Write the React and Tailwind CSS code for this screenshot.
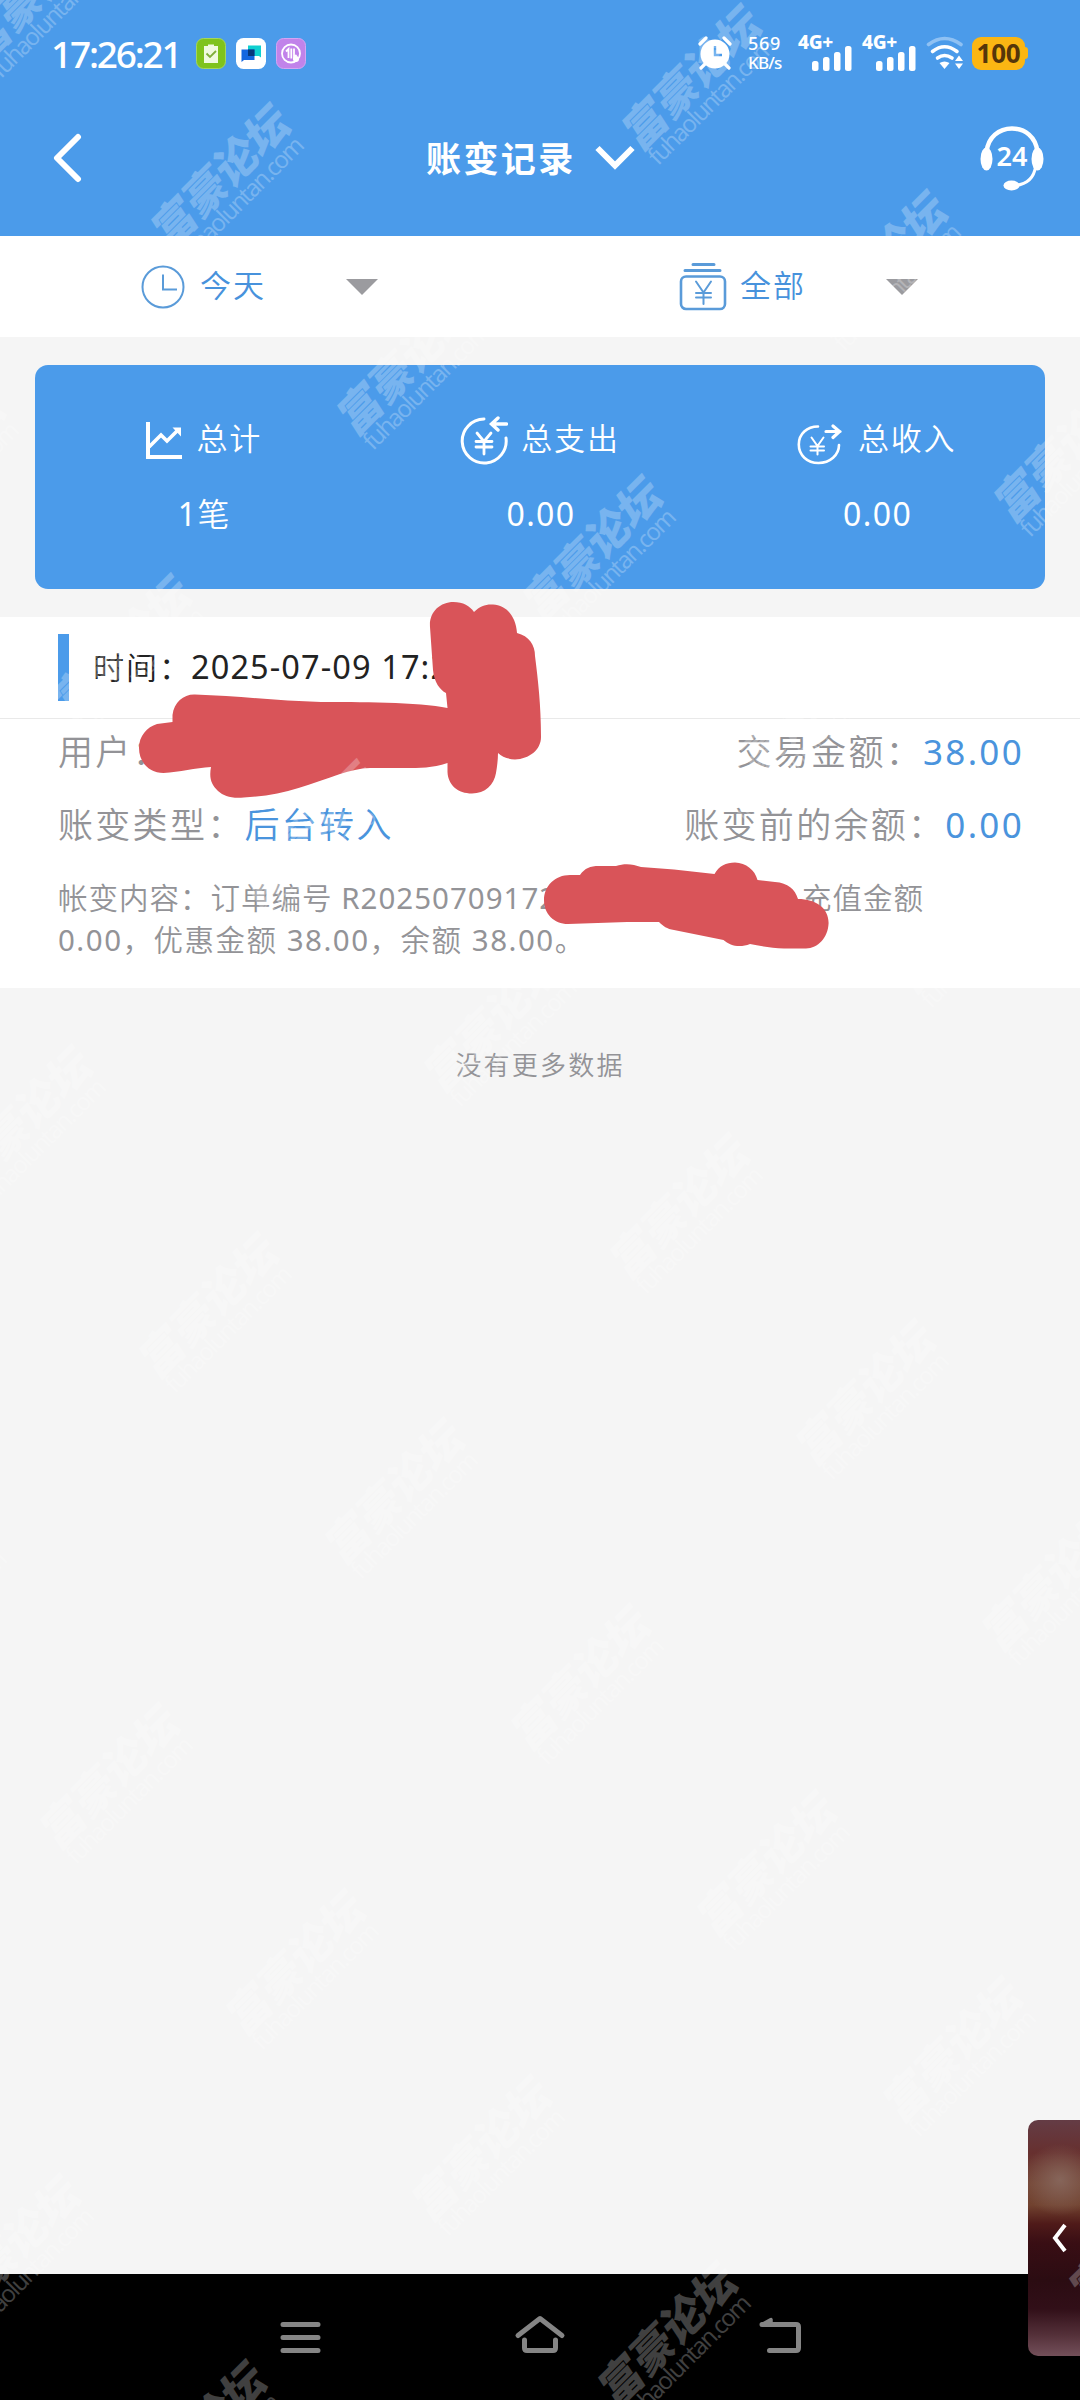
import React from "react";

const FONT = "font-['Noto_Sans','Noto_Sans_CJK_SC',sans-serif]";

// Repeating diagonal forum stamp: two step vectors spread it over the screen
const WATERMARKS = [];
for (let i = -3; i <= 15; i++) {
	for (let j = -5; j <= 4; j++) {
		const x = 265 + i * 186 + j * 471;
		const y = 108 + i * 186.1 - j * 99;
		if (x > -60 && x < 1240 && y > -180 && y < 2440) {
			WATERMARKS.push({ x, y });
		}
	}
}

const Watermark = () => (
	<div className="pointer-events-none absolute inset-0 overflow-hidden text-white opacity-25">
		{WATERMARKS.map(({ x, y }) => (
			<div
				key={`${x}-${y}`}
				className="absolute h-[66px] w-[180px] origin-top-left -rotate-45"
				style={{ left: x - 124, top: y + 117 }}
			>
				<div className="h-[40px] w-max origin-bottom-left -skew-x-12 font-['Noto_Sans_CJK_SC',sans-serif] text-[44px] leading-[38px] font-black tracking-[-0.4px]">
					富豪论坛
				</div>
				<div className="w-max pl-[4px] font-['Open_Sans',sans-serif] text-[24px] leading-[23px] font-medium tracking-[-1.700px]">
					fuhaoluntan.com
				</div>
			</div>
		))}
	</div>
);

// Digits and latin letters are set one weight heavier than the Chinese text
const Mixed = ({ children }) =>
	children.split(/([0-9A-Z.]+)/).map((part, i) =>
		i % 2 ? (
			<span key={i} className="font-normal">
				{part}
			</span>
		) : (
			part
		)
	);

const Signal = () => (
	<div className="relative h-[36px] w-[54px]">
		<span className="absolute -top-[2px] left-0 text-[19px] leading-[18px] font-extrabold tracking-[-0.3px]">
			4G+
		</span>
		<svg className="absolute right-0 bottom-0" width="40" height="25" viewBox="0 0 40 25" fill="#fff">
			<rect x="0" y="15" width="6.5" height="10" rx="2.5" />
			<rect x="11" y="11" width="6.5" height="14" rx="2.5" />
			<rect x="22" y="6" width="6.5" height="19" rx="2.5" />
			<rect x="33" y="0" width="6.5" height="25" rx="2.5" />
		</svg>
	</div>
);

const StatusBar = () => (
	<div className="flex h-[106px] items-center pl-[51px] text-white">
		<span className="w-[145px] text-[37px] leading-none font-medium tracking-[-2.200px]">
			17:26:21
		</span>
		<div className="flex gap-[10px]">
			<svg width="30" height="31" viewBox="0 0 30 31">
				<rect x=".5" y=".5" width="29" height="30" rx="7" fill="#7fc31c" stroke="#a5d65e" />
				<path d="M8 8h4V6.500h6V8h4v17H8z" fill="#f0fadf" />
				<path d="M10.500 15.500l3.500 3.500 6-6" fill="none" stroke="#7fae3a" strokeWidth="1.800" />
			</svg>
			<svg width="30" height="31" viewBox="0 0 30 31">
				<rect width="30" height="31" rx="7.500" fill="#fff" />
				<path d="M12 7.500h13v12l-2-1.500H12z" fill="#0fd0d0" />
				<path d="M5.500 11.500h13V22H8l-2.500 2z" fill="#1366e0" />
				<path d="M12 11.500h6.500V18H12z" fill="#06377c" />
			</svg>
			<svg width="30" height="31" viewBox="0 0 30 31">
				<rect x=".5" y=".5" width="29" height="30" rx="7" fill="#c183ea" stroke="#d4a5f2" />
				<circle cx="15" cy="15.500" r="9" fill="none" stroke="#fff" strokeWidth="1.800" />
				<path d="M10 13.500l2.500-2.500v9M15.300 10.500v10M18 10.500v9l2.500-2.500" fill="none" stroke="#fff" strokeWidth="1.800" />
				<circle cx="20" cy="21" r="3" fill="#fff" />
			</svg>
		</div>
		<svg className="ml-[392px]" width="34" height="34" viewBox="0 0 34 34" fill="#fff">
			<circle cx="17" cy="18" r="14.500" />
			<path d="M2 8l6-6M32 8l-6-6M7 28l-4 4M27 28l4 4" stroke="#fff" strokeWidth="3.200" strokeLinecap="round" />
			<path d="M17 10v9h7" fill="none" stroke="#4b9bea" strokeWidth="2.400" />
		</svg>
		<div className="ml-[16px] flex w-[50px] flex-col text-[18px] leading-[20px] font-medium">
			<span className="tracking-[0.7px]">569</span>
			<span className="text-[17px] tracking-[-0.8px]">KB/s</span>
		</div>
		<div className="flex gap-[10px]">
			<Signal />
			<Signal />
		</div>
		<svg className="ml-[10px]" width="38" height="34" viewBox="0 0 38 34" fill="none" strokeWidth="3.600" strokeLinecap="round">
			<path d="M2.500 8.500Q18.500-3.500 35 8.500" stroke="#8fc1f3" />
			<path d="M6.500 15.500Q18.500 6 31 15.500" stroke="#fff" />
			<path d="M11.500 22Q18.500 17 26 22" stroke="#fff" />
			<path d="M13.500 27Q18.500 24 23.500 27L18.500 33z" fill="#fff" />
			<path d="M29 25l4-5.500 4 5.500zM29 27.500l4 5.500 4-5.500z" fill="#fff" />
		</svg>
		<div className="ml-[8px] flex h-[33px] w-[53px] items-center justify-center rounded-[9px] bg-[#fbb613] text-[26px] leading-none font-bold tracking-[-0.2px] text-[#55360a]">
			100
		</div>
		<span className="h-[12px] w-[3px] rounded-r bg-[#fbb613]" />
	</div>
);

const Header = () => (
	<header className="h-[236px] shrink-0 bg-[#4b9bea]">
		<StatusBar />
		<div className="flex h-[104px] items-center text-white">
			<svg className="ml-[53px]" width="30" height="50" viewBox="0 0 30 50" fill="none" stroke="#fff" strokeWidth="6" strokeLinecap="round" strokeLinejoin="round">
				<path d="M25 4L4 25l21 21" />
			</svg>
			<h1 className="ml-[343px] text-[35px] leading-none font-bold tracking-[2.400px]">
				账变记录
			</h1>
			<svg className="ml-[19px]" width="40" height="26" viewBox="0 0 40 26" fill="none" stroke="#fff" strokeWidth="6">
				<path d="M2.500 3L20 20.500 37.500 3" />
			</svg>
			<svg className="ml-[344px]" width="66" height="66" viewBox="0 0 66 66">
				<path d="M7.500 27C9 12 20 3.500 33 3.500S57 12 58.500 27" fill="none" stroke="#fff" strokeWidth="4.500" />
				<ellipse cx="7.500" cy="34" rx="6" ry="11.500" fill="#fff" />
				<ellipse cx="58.500" cy="34" rx="6" ry="11.500" fill="#fff" />
				<path d="M56.500 42c-1.500 10-8 17-20 18.500" fill="none" stroke="#fff" strokeWidth="3" />
				<ellipse cx="32.500" cy="60.500" rx="8" ry="5" fill="#fff" />
				<text x="33" y="40.500" textAnchor="middle" fontSize="27" fontWeight="600" fill="#fff">24</text>
			</svg>
		</div>
	</header>
);

const Caret = () => (
	<span className="h-0 w-0 border-x-[16px] border-t-[16px] border-x-transparent border-t-[#9b9b9f]" />
);

const Filters = () => (
	<div className="grid h-[101px] shrink-0 grid-cols-2 bg-white text-[31px] leading-none font-[350] tracking-[2px] text-[#4792dc]">
		<div className="flex items-center pl-[141px]">
			<svg width="44" height="44" viewBox="0 0 44 44" fill="none" stroke="#5a9bd9" strokeWidth="2">
				<circle cx="22" cy="22" r="20.500" />
				<path d="M22 9.500v15h14" />
			</svg>
			<span className="-mt-[2px] ml-[15px] w-[146px]">今天</span>
			<Caret />
		</div>
		<div className="flex items-center pl-[139px]">
			<svg width="48" height="49" viewBox="0 0 48 49" fill="none" stroke="#5a9bd9" strokeWidth="3" strokeLinecap="round">
				<path d="M14 2.500h21M6 8.500h35" />
				<rect x="2" y="14.500" width="44" height="32.500" rx="5" strokeWidth="2.600" />
				<path d="M17 19.500l7.500 11 7.500-11M24.500 30.500V42M17 31h15M17 35.500h15" strokeWidth="2" />
			</svg>
			<span className="-mt-[2px] ml-[13px] w-[146px]">全部</span>
			<Caret />
		</div>
	</div>
);

const ChartIcon = () => (
	<svg width="36" height="37" viewBox="0 0 36 37" fill="none" stroke="#fff" strokeWidth="4">
		<path d="M2 0v35h34" />
		<path d="M3 25l12-12 6 6L31 9" strokeWidth="3.600" />
		<path d="M26.500 5.500H35v9z" fill="#fff" stroke="none" />
	</svg>
);

const ExpenseIcon = () => (
	<svg width="48" height="49" viewBox="0 0 48 49" fill="none" stroke="#fff" strokeWidth="3" strokeLinecap="round">
		<path d="M24 3A22 22 0 1 0 46 22" />
		<path d="M46.500 8H32M38 2l-6.500 6 6.500 6" strokeWidth="3.400" />
		<path d="M17 17l7 8.500 7-8.500M24 25.500V38M16 25.500h16M16 31h16" strokeWidth="2.800" />
	</svg>
);

const IncomeIcon = () => (
	<svg className="mt-[8px]" width="45" height="41" viewBox="0 0 45 41" fill="none" stroke="#fff" strokeWidth="2.600" strokeLinecap="round">
		<path d="M21 2.500C10 2.500 1.800 10 1.800 20.500S10 39 21.500 39s20.500-8 20.500-18" />
		<path d="M29 7.500h14M36 2l6.500 5.500-6.500 6" strokeWidth="3.200" />
		<path d="M14.500 13.500l6 8.500 6-8.500M20.500 22v8.500M13.500 22.500h13.500M13.500 26.500h13.500" strokeWidth="2" />
	</svg>
);

const STATS = [
	{ label: "总计", value: "1笔", icon: <ChartIcon />, gap: "gap-[15px] pl-[1px]" },
	{ label: "总支出", value: "0.00", icon: <ExpenseIcon />, gap: "gap-[13px]" },
	{ label: "总收入", value: "0.00", icon: <IncomeIcon />, gap: "gap-[16px]" },
];

const Summary = () => (
	<section className="mx-[35px] mt-[28px] grid h-[224px] shrink-0 grid-cols-3 rounded-[13px] bg-[#4b9bea] pt-[49px] text-white">
		{STATS.map((s) => (
			<div key={s.label} className="flex flex-col items-center">
				<div className={`flex h-[52px] items-center text-[31px] leading-none font-[350] tracking-[1.800px] ${s.gap}`}>
					{s.icon}
					<span className="-mt-[3px]">{s.label}</span>
				</div>
				<div className="mt-[24px] pl-[2px] text-[32px] leading-[48px] font-[350] tracking-[1.400px]">
					<Mixed>{s.value}</Mixed>
				</div>
			</div>
		))}
	</section>
);

const Field = ({ label, value = "" }) => (
	<div className="flex items-center text-[35px] font-[350] tracking-[2.300px]">
		<span>{label}</span>
		<span className="text-[#4a94dd]">
			<Mixed>{value}</Mixed>
		</span>
	</div>
);

// Hand-drawn marker strokes covering the private parts of the record
const Redaction = () => (
	<svg className="absolute top-0 left-0" width="1080" height="371" viewBox="0 617 1080 371" overflow="visible" fill="#d95459">
		<path d="M139 748C139 736 147 727 157 724L172.500 722V715C174 702 184 694 195 694.500C240 696 280 701 321 702C355 702 420 702 447.500 708L446 693C440 690 434 682 433 670L430 627C429 612 440 602 453.500 602C463 602 470 606 474 612C480 606 486 604 493 604.500C506 605 516 616 517 633C529 636 535 645 535 656C538 680 541 705 541 737C541 750 529 759 515 759.500C508 759 502 757 498 753C498 760 497 767 496 773C494 785 485 793.500 472 793.500C458 793.500 448 785 447.500 772V763C432 768 420 768 405 768H370C360 768 350 771 340 774C310 784 285 795 250 797C232 799 225 797 218 791C211 784 209 778 211 767C195 768 180 772 163.500 773C149 773 139 762 139 748Z" />
		<path d="M544 900C544 886 555 875 570 875H580C585 868 590 866 599 866H616C625 863 633 864 641 867L674 869.500L714.500 874C719 866 726 862.500 735 862.500C746 863 755 870 757.500 880L775 882C788 883 795 889 798 899C816 899 828.600 908 828.600 923C828 938 818 948 806 948.500H784C772 948 760 946 750 944C740 948 730 946 723.500 940L674 930C667 929 663 926 659 922H627L568 924C554 924 544 914 544 900Z" />
	</svg>
);

const Record = () => (
	<section className="relative mt-[28px] h-[371px] shrink-0 bg-white text-[#939397]">
		<div className="flex h-[102px] items-center border-b border-[#e9e9e9] pl-[58px] text-[#222]">
			<span className="h-[67px] w-[11px] bg-[#4b9bea]" />
			<span className="ml-[24px] text-[31px] leading-none font-[350] tracking-[2px]">时间：</span>
			<span className="-ml-[1px] text-[32.500px] leading-none tracking-[1.100px]">2025-07-09 17:2</span>
		</div>
		<div className="flex h-[67px] items-center justify-between pr-[56px] pl-[58px]">
			<Field label="用户：" />
			<Field label="交易金额：" value="38.00" />
		</div>
		<div className="mt-[6px] flex h-[67px] items-center justify-between pr-[56px] pl-[58px]">
			<Field label="账变类型：" value="后台转入" />
			<Field label="账变前的余额：" value="0.00" />
		</div>
		<div className="mt-[18px] pl-[58px] text-[29.500px] leading-[42px] font-[350] tracking-[1px]">
			<div className="flex">
				<span className="w-[744px]">
					<Mixed>帐变内容：订单编号 R20250709172</Mixed>
				</span>
				<span>充值金额</span>
			</div>
			<div className="tracking-[1.500px]">
				<Mixed>0.00，优惠金额 38.00，余额 38.00。</Mixed>
			</div>
		</div>
		<Redaction />
	</section>
);

const SidePreview = () => (
	<div className="absolute top-[2120px] right-0 flex h-[236px] w-[52px] items-center overflow-hidden rounded-l-[10px]">
		<div className="absolute inset-0 bg-[linear-gradient(180deg,#643c45_0%,#67302f_14%,#744534_27%,#71422f_36%,#4f1a19_44%,#390e14_52%,#2b0c12_68%,#310f18_80%,#543039_91%,#73505a_100%)]" />
		<div className="absolute inset-0 bg-[radial-gradient(ellipse_38px_36px_at_32px_60px,#86655a_0%,#86655a80_50%,transparent_100%)]" />
		<svg className="relative ml-[24px]" width="16" height="30" viewBox="0 0 16 30" fill="none" stroke="#fff" strokeWidth="4">
			<path d="M13 2L3 15l10 13" />
		</svg>
	</div>
);

const NavBar = () => (
	<nav className="flex h-[126px] shrink-0 items-start bg-black pt-[41px]">
		<svg className="ml-[280px]" width="41" height="40" viewBox="0 0 41 40" stroke="#858585" strokeWidth="5" strokeLinecap="round">
			<path d="M3 9.500h35M3 22.500h35M3 35.500h35" />
		</svg>
		<svg className="ml-[193px]" width="52" height="40" viewBox="0 0 52 40" fill="none" stroke="#858585" strokeWidth="5" strokeLinecap="round" strokeLinejoin="round">
			<path d="M4 20.500L26 3.500l22 17" />
			<path d="M10.500 25v8q0 2.500 2.500 2.500h26q2.500 0 2.500-2.500v-8" />
		</svg>
		<svg className="ml-[192px]" width="44" height="40" viewBox="0 0 44 40" fill="none" stroke="#858585" strokeWidth="5" strokeLinecap="round" strokeLinejoin="round">
			<path d="M4 9.500h34q2.500 0 2.500 2.500v21q0 2.500-2.500 2.500H11.500" />
			<path d="M4 9.500l9-5v4z" strokeWidth="3.500" fill="#858585" />
		</svg>
	</nav>
);

const App = () => {
	return (
		<div className={`relative flex h-[2400px] w-[1080px] flex-col overflow-hidden bg-[#f5f5f5] ${FONT}`}>
			<Header />
			<Filters />
			<Summary />
			<Record />
			<p className="flex-1 pt-[56px] text-center text-[26px] leading-[42px] font-[350] tracking-[2.200px] text-[#939397]">
				没有更多数据
			</p>
			<NavBar />
			<SidePreview />
			<Watermark />
		</div>
	);
};

export default App;
